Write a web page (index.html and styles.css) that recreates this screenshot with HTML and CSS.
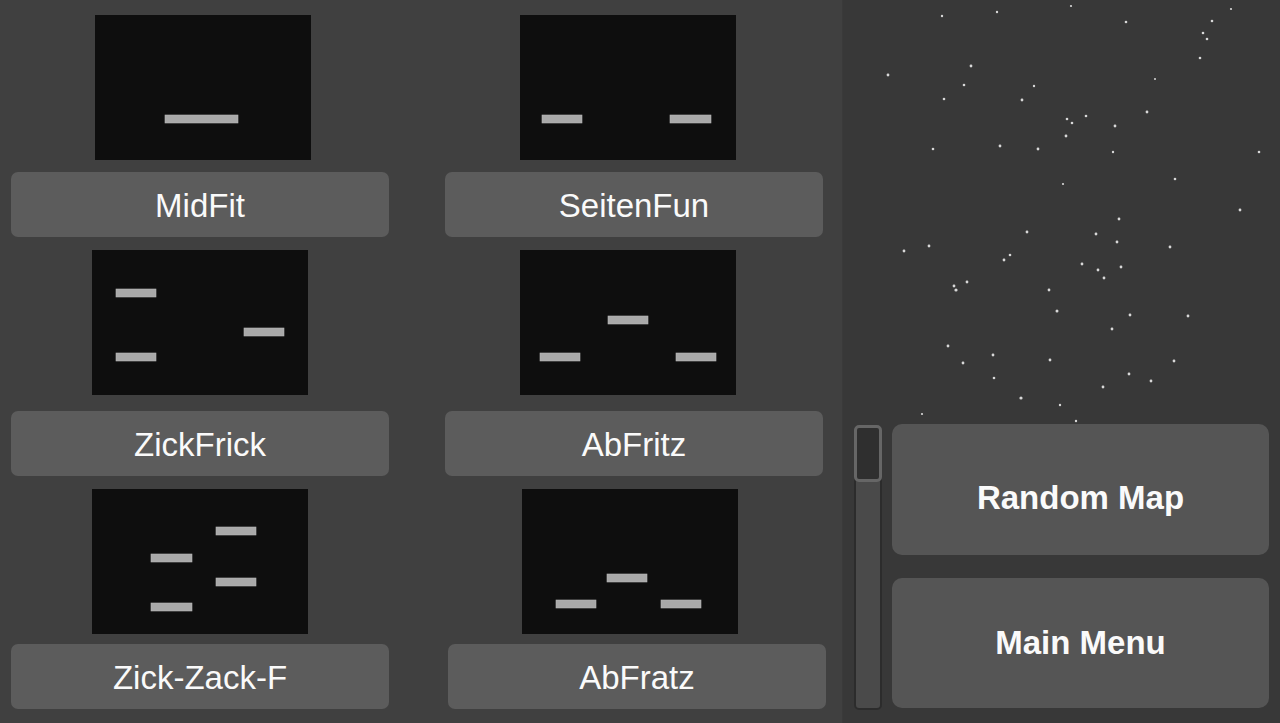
FILE: index.html
```html
<!DOCTYPE html>
<html lang="en">
<head>
  <meta charset="UTF-8">
  <meta name="viewport" content="width=device-width, initial-scale=1.0">
  <title>Map Select</title>
  <link rel="stylesheet" href="styles.css">
</head>
<body>

<div class="screen">
  <!-- Map list -->
  <div class="map-list">
    <div class="map-card">
      <svg class="preview nudge-right" viewBox="0 0 216 145">
        <rect x="70" y="100" width="73" height="8"/>
      </svg>
      <button class="map-button">MidFit</button>
    </div>

    <div class="map-card">
      <svg class="preview nudge-left" viewBox="0 0 216 145">
        <rect x="22" y="100" width="40" height="8"/>
        <rect x="150" y="100" width="41" height="8"/>
      </svg>
      <button class="map-button">SeitenFun</button>
    </div>

    <div class="map-card">
      <svg class="preview" viewBox="0 0 216 145">
        <rect x="24" y="39" width="40" height="8"/>
        <rect x="152" y="78" width="40" height="8"/>
        <rect x="24" y="103" width="40" height="8"/>
      </svg>
      <button class="map-button">ZickFrick</button>
    </div>

    <div class="map-card">
      <svg class="preview nudge-left" viewBox="0 0 216 145">
        <rect x="88" y="66" width="40" height="8"/>
        <rect x="20" y="103" width="40" height="8"/>
        <rect x="156" y="103" width="40" height="8"/>
      </svg>
      <button class="map-button">AbFritz</button>
    </div>

    <div class="map-card">
      <svg class="preview" viewBox="0 0 216 145">
        <rect x="124" y="38" width="40" height="8"/>
        <rect x="59" y="65" width="41" height="8"/>
        <rect x="124" y="89" width="40" height="8"/>
        <rect x="59" y="114" width="41" height="8"/>
      </svg>
      <button class="map-button">Zick-Zack-F</button>
    </div>

    <div class="map-card shifted">
      <svg class="preview" viewBox="0 0 216 145">
        <rect x="85" y="85" width="40" height="8"/>
        <rect x="34" y="111" width="40" height="8"/>
        <rect x="139" y="111" width="40" height="8"/>
      </svg>
      <button class="map-button">AbFratz</button>
    </div>
  </div>

  <!-- Side panel -->
  <div class="side-panel">
    <svg class="stars" viewBox="0 0 437 424" preserveAspectRatio="none">
      <g fill="#d8d8d8">
        <circle cx="99" cy="16" r="1.2"/><circle cx="154" cy="12" r="1.2"/>
        <circle cx="228" cy="6" r="1.1"/><circle cx="283" cy="22" r="1.3"/>
        <circle cx="388" cy="9" r="1.1"/><circle cx="369" cy="21" r="1.3"/>
        <circle cx="360" cy="33" r="1.3"/><circle cx="364" cy="39" r="1.3"/>
        <circle cx="357" cy="58" r="1.3"/><circle cx="128" cy="66" r="1.4"/>
        <circle cx="45" cy="75" r="1.4"/><circle cx="121" cy="85" r="1.3"/>
        <circle cx="191" cy="86" r="1.2"/><circle cx="312" cy="79" r="1"/>
        <circle cx="101" cy="99" r="1.3"/><circle cx="179" cy="100" r="1.4"/>
        <circle cx="224" cy="119" r="1.3"/><circle cx="229" cy="123" r="1.3"/>
        <circle cx="243" cy="116" r="1.3"/><circle cx="272" cy="126" r="1.4"/>
        <circle cx="304" cy="112" r="1.4"/><circle cx="223" cy="136" r="1.4"/>
        <circle cx="90" cy="149" r="1.3"/><circle cx="157" cy="146" r="1.4"/>
        <circle cx="195" cy="149" r="1.4"/><circle cx="270" cy="152" r="1.2"/>
        <circle cx="416" cy="152" r="1.3"/><circle cx="220" cy="184" r="1.1"/>
        <circle cx="332" cy="179" r="1.3"/><circle cx="397" cy="210" r="1.4"/>
        <circle cx="276" cy="219" r="1.4"/><circle cx="184" cy="232" r="1.4"/>
        <circle cx="253" cy="234" r="1.4"/><circle cx="274" cy="242" r="1.4"/>
        <circle cx="327" cy="247" r="1.4"/><circle cx="86" cy="246" r="1.4"/>
        <circle cx="61" cy="251" r="1.4"/><circle cx="167" cy="255" r="1.3"/>
        <circle cx="161" cy="260" r="1.4"/><circle cx="239" cy="264" r="1.4"/>
        <circle cx="255" cy="270" r="1.4"/><circle cx="278" cy="267" r="1.4"/>
        <circle cx="261" cy="278" r="1.4"/><circle cx="111" cy="286" r="1.4"/>
        <circle cx="113" cy="290" r="1.6"/><circle cx="124" cy="282" r="1.4"/>
        <circle cx="206" cy="290" r="1.4"/><circle cx="214" cy="311" r="1.5"/>
        <circle cx="287" cy="315" r="1.4"/><circle cx="345" cy="316" r="1.4"/>
        <circle cx="269" cy="329" r="1.4"/><circle cx="105" cy="346" r="1.4"/>
        <circle cx="150" cy="355" r="1.4"/><circle cx="120" cy="363" r="1.4"/>
        <circle cx="207" cy="360" r="1.4"/><circle cx="331" cy="361" r="1.4"/>
        <circle cx="286" cy="374" r="1.4"/><circle cx="308" cy="381" r="1.4"/>
        <circle cx="151" cy="378" r="1.3"/><circle cx="260" cy="387" r="1.4"/>
        <circle cx="178" cy="398" r="1.6"/><circle cx="217" cy="405" r="1.2"/>
        <circle cx="79" cy="414" r="1.1"/><circle cx="233" cy="421" r="1.2"/>
      </g>
    </svg>

    <div class="menu-area">
      <div class="scrollbar">
        <div class="scroll-handle"></div>
      </div>
      <div class="menu-buttons">
        <button class="menu-button random">Random Map</button>
        <button class="menu-button">Main Menu</button>
      </div>
    </div>
  </div>
</div>

</body>
</html>
```

FILE: styles.css
```css
body {
  margin: 0;
  width: 1280px;
  height: 723px;
  overflow: hidden;
  font-family: 'Liberation Sans', Arial, sans-serif;
  background-color: #383838;
  color: #fff;
}

.screen {
  display: flex;
  height: 100%;
}

/* Left list of maps */
.map-list {
  width: 843px;
  box-sizing: border-box;
  background-color: #404040;
  border-right: 1px solid #3a3a3a;
  padding: 15px 20px 0 11px;
  display: grid;
  grid-template-columns: 378px 378px;
  grid-template-rows: 222px 226px 220px;
  column-gap: 56px;
  row-gap: 13px;
}

.map-card {
  display: flex;
  flex-direction: column;
  align-items: center;
  justify-content: space-between;
}

.map-card.shifted {
  margin-left: 3px;
  margin-right: -3px;
}

.preview {
  display: block;
  width: 216px;
  height: 145px;
  background-color: #0e0e0e;
}

/* margins on a centred item move it by half */
.preview.nudge-right {
  margin-left: 6px;
}

.preview.nudge-left {
  margin-left: -13px;
}

.map-card.shifted .preview {
  margin-left: -14px;
}

.preview rect {
  fill: #a9a9a9;
  stroke: #b8b8b8;
  stroke-width: 0.6;
}

.map-button {
  width: 100%;
  height: 65px;
  border: none;
  border-radius: 7px;
  background-color: #5c5c5c;
  color: #fafafa;
  font-family: inherit;
  font-size: 33px;
  padding: 2px 0 0;
  cursor: pointer;
}

/* Right side */
.side-panel {
  flex: 1;
  display: flex;
  flex-direction: column;
  background-color: #383838;
}

.stars {
  display: block;
  width: 100%;
  height: 424px;
  flex: none;
}

.menu-area {
  display: flex;
  gap: 10px;
  padding: 0 11px 15px 11px;
  flex: 1;
}

.scrollbar {
  width: 28px;
  box-sizing: border-box;
  margin-top: 1px;
  margin-bottom: -2px;
  border: 2px solid #2c2c2c;
  border-radius: 5px;
  background-color: #4a4a4a;
}

.scroll-handle {
  height: 57px;
  box-sizing: border-box;
  border: 3px solid #666666;
  border-radius: 5px;
  background-color: #2f2f2f;
  margin: -2px;
}

.menu-buttons {
  flex: 1;
  display: flex;
  flex-direction: column;
  gap: 23px;
}

.menu-button {
  height: 130px;
  box-sizing: border-box;
  border: none;
  border-radius: 10px;
  background-color: #555555;
  color: #fafafa;
  font-family: inherit;
  font-size: 33px;
  font-weight: bold;
  padding: 0;
  cursor: pointer;
}

.menu-button.random {
  height: 131px;
  padding-top: 16px;
}
```
